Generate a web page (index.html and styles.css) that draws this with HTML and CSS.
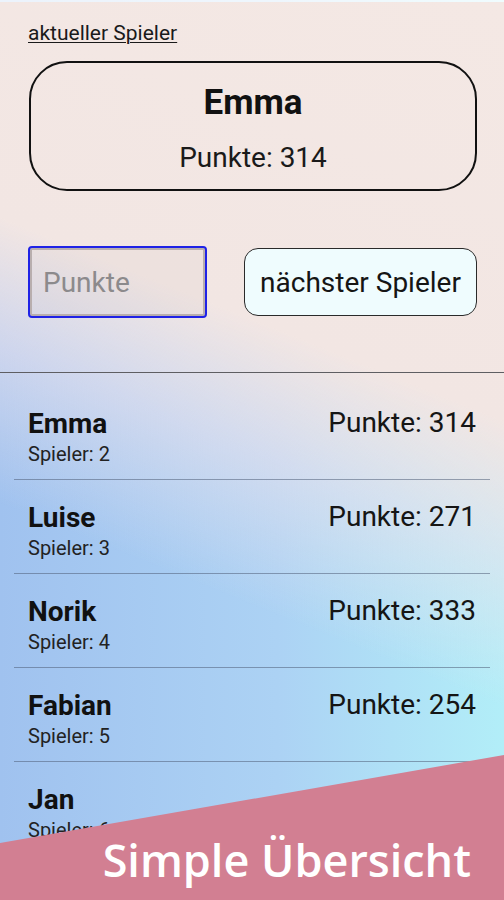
FILE: index.html
```html
<!DOCTYPE html>
<html lang="de">
<head>
<meta charset="utf-8">
<title>Punkte</title>
<link rel="stylesheet" href="styles.css">
</head>
<body>
<div class="screen">
  <section class="current">
    <div class="label">aktueller Spieler</div>
    <div class="card">
      <div class="card-name">Emma</div>
      <div class="card-points">Punkte: 314</div>
    </div>
    <div class="controls">
      <input class="points-input" type="text" placeholder="Punkte">
      <button class="next-btn" type="button">nächster Spieler</button>
    </div>
  </section>
  <ul class="list">
    <li class="row"><div class="info"><div class="name">Emma</div><div class="sub">Spieler: 2</div></div><div class="pts">Punkte: 314</div></li>
    <li class="row"><div class="info"><div class="name">Luise</div><div class="sub">Spieler: 3</div></div><div class="pts">Punkte: 271</div></li>
    <li class="row"><div class="info"><div class="name">Norik</div><div class="sub">Spieler: 4</div></div><div class="pts">Punkte: 333</div></li>
    <li class="row"><div class="info"><div class="name">Fabian</div><div class="sub">Spieler: 5</div></div><div class="pts">Punkte: 254</div></li>
    <li class="row"><div class="info"><div class="name">Jan</div><div class="sub">Spieler: 6</div></div><div class="pts">Punkte: 298</div></li>
  </ul>
  <div class="banner"><span class="banner-text">Simple Übersicht</span></div>
</div>
</body>
</html>
```
FILE: styles.css
```css
html, body {
  margin: 0;
  padding: 0;
}
body {
  font-family: Roboto, "Liberation Sans", sans-serif;
  color: #111;
}
.screen {
  position: relative;
  height: 900px;
  overflow: hidden;
  box-sizing: border-box;
  border-top: 2px solid rgba(255,255,255,0.8);
  background:
    linear-gradient(202deg, #f4e8e4 0%, #f2e6e3 38%, rgba(236,226,236,0.6) 50%, rgba(242,230,228,0) 64%),
    linear-gradient(90deg, #a0c2ef 0%, #acd2f4 55%, #b2eef8 100%);
}
.current {
  padding: 18px 27px 0 28px;
}
.label {
  font-size: 21px;
  line-height: 26px;
  text-decoration: underline;
  text-underline-offset: 2px;
  text-decoration-thickness: 1px;
  color: #1a1a1a;
}
.card {
  margin-top: 15px;
  margin-left: 1px;
  height: 130px;
  box-sizing: border-box;
  border: 2px solid #111;
  border-radius: 38px;
  padding-top: 20px;
  text-align: center;
}
.card-name {
  font-size: 35px;
  font-weight: 700;
  line-height: 40px;
}
.card-points {
  margin-top: 19px;
  font-size: 28px;
  line-height: 32px;
  color: #1a1a1a;
}
.controls {
  display: flex;
  align-items: center;
  gap: 37px;
  margin-top: 55px;
}
.points-input {
  width: 179px;
  height: 72px;
  box-sizing: border-box;
  margin: 0;
  border: 2px solid #1f22e6;
  border-radius: 4px;
  box-shadow: inset 0 0 0 2px #b8aeae;
  background: rgba(120,100,110,0.04);
  padding: 0 0 0 13px;
  font-family: Roboto, "Liberation Sans", sans-serif;
  font-size: 28px;
  color: #222;
  outline: none;
}
.points-input::placeholder {
  color: #8c8a8c;
}
.next-btn {
  width: 233px;
  height: 68px;
  box-sizing: border-box;
  margin: 0;
  padding: 0;
  border: 1.5px solid #2a2a2a;
  border-radius: 14px;
  background: #effcfe;
  font-family: Roboto, "Liberation Sans", sans-serif;
  font-size: 28px;
  color: #151515;
}
.list {
  list-style: none;
  margin: 54px 0 0;
  padding: 13px 14px 0;
  border-top: 1.5px solid #5e5e62;
}
.row {
  display: flex;
  justify-content: space-between;
  align-items: flex-start;
  padding: 20px 14px 13px;
  border-bottom: 1px solid rgba(80,95,120,0.55);
}
.name {
  font-size: 28px;
  font-weight: 700;
  line-height: 36px;
}
.sub {
  font-size: 20px;
  line-height: 24px;
  color: #222;
}
.pts {
  font-size: 28px;
  line-height: 34px;
  color: #151515;
}
.banner {
  position: absolute;
  left: 0;
  right: 0;
  bottom: 0;
  height: 145px;
  background: #d27f92;
  clip-path: polygon(0 88px, 100% 0, 100% 100%, 0 100%);
  display: flex;
  justify-content: flex-end;
  align-items: flex-end;
  padding: 0 33px 12px 0;
  box-sizing: border-box;
}
.banner-text {
  font-family: "Open Sans", "Noto Sans", sans-serif;
  font-weight: 600;
  font-size: 45px;
  line-height: 56px;
  color: #fff;
}
```
